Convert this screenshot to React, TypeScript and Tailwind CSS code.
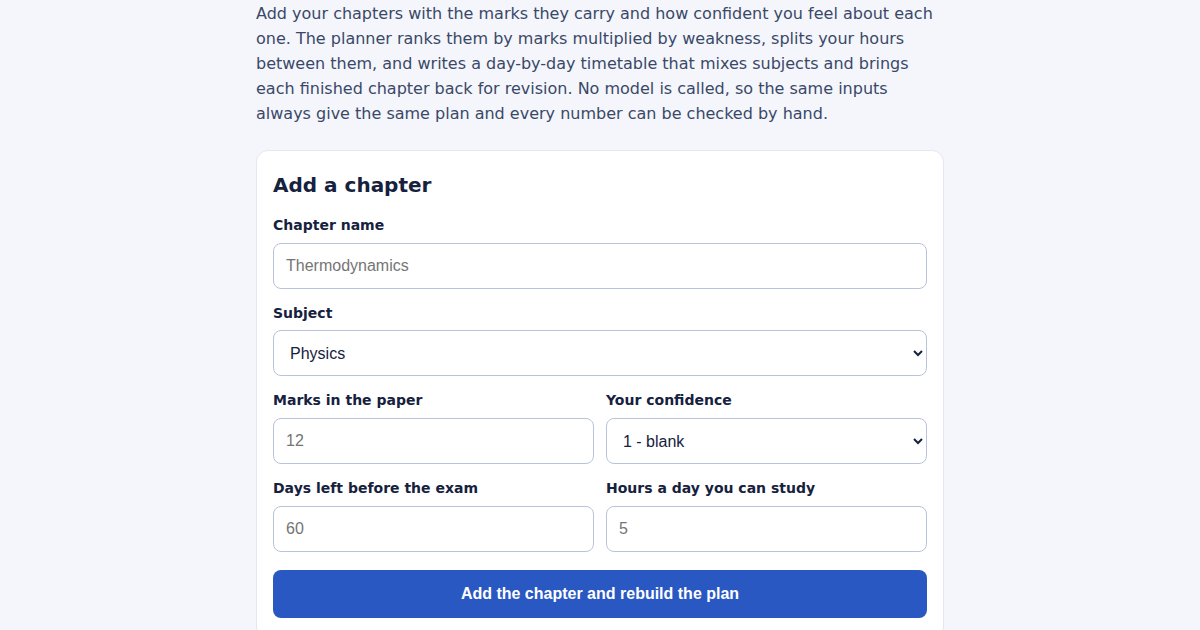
import React from "react";

const label = "block text-[14px] leading-5 font-bold text-[#16213e] mb-2";
const field =
  "block w-full h-[46px] rounded-lg border border-[#b9c3d9] bg-white px-3 text-[16px] text-[#16213e] placeholder:text-[#757575] [font-family:'Liberation_Sans',Arial,sans-serif]";

export default function App() {
  return (
    <div className="min-h-screen bg-[#f4f6fb] [font-family:'DejaVu_Sans',sans-serif]">
      <div className="mx-auto w-[688px]">
        <p className="pt-px text-[16px] leading-[25px] text-[#3a4868]">
          Add your chapters with the marks they carry and how confident you feel about each one. The planner
          ranks them by marks multiplied by weakness, splits your hours between them, and writes a day-by-day
          timetable that mixes subjects and brings each finished chapter back for revision. No model is called,
          so the same inputs always give the same plan and every number can be checked by hand.
        </p>

        <div className="mt-[24px] rounded-xl border border-[#e2e7f0] bg-white px-4 pt-5 pb-5">
          <h2 className="text-[20px] leading-7 font-bold text-[#16213e]">Add a chapter</h2>

          <div className="mt-4 flex flex-col gap-[14px]">
            <div>
              <label className={label}>Chapter name</label>
              <input className={field} placeholder="Thermodynamics" />
            </div>

            <div>
              <label className="block text-[14px] leading-5 font-bold text-[#16213e] mb-[7px]">Subject</label>
              <select className={field} defaultValue="Physics">
                <option>Physics</option>
                <option>Chemistry</option>
                <option>Mathematics</option>
                <option>Biology</option>
              </select>
            </div>

            <div className="grid grid-cols-2 gap-3">
              <div>
                <label className={label}>Marks in the paper</label>
                <input className={field} placeholder="12" />
              </div>
              <div>
                <label className={label}>Your confidence</label>
                <select className={field} defaultValue="1">
                  <option value="1">1 - blank</option>
                  <option value="2">2 - shaky</option>
                  <option value="3">3 - okay</option>
                  <option value="4">4 - good</option>
                  <option value="5">5 - solid</option>
                </select>
              </div>
            </div>

            <div className="grid grid-cols-2 gap-3">
              <div>
                <label className={label}>Days left before the exam</label>
                <input className={field} placeholder="60" />
              </div>
              <div>
                <label className={label}>Hours a day you can study</label>
                <input className={field} placeholder="5" />
              </div>
            </div>
          </div>

          <button className="mt-[18px] h-12 w-full rounded-lg bg-[#2a58c2] text-[16px] font-bold text-white [font-family:'Liberation_Sans',Arial,sans-serif]">
            Add the chapter and rebuild the plan
          </button>
        </div>
      </div>
    </div>
  );
}
